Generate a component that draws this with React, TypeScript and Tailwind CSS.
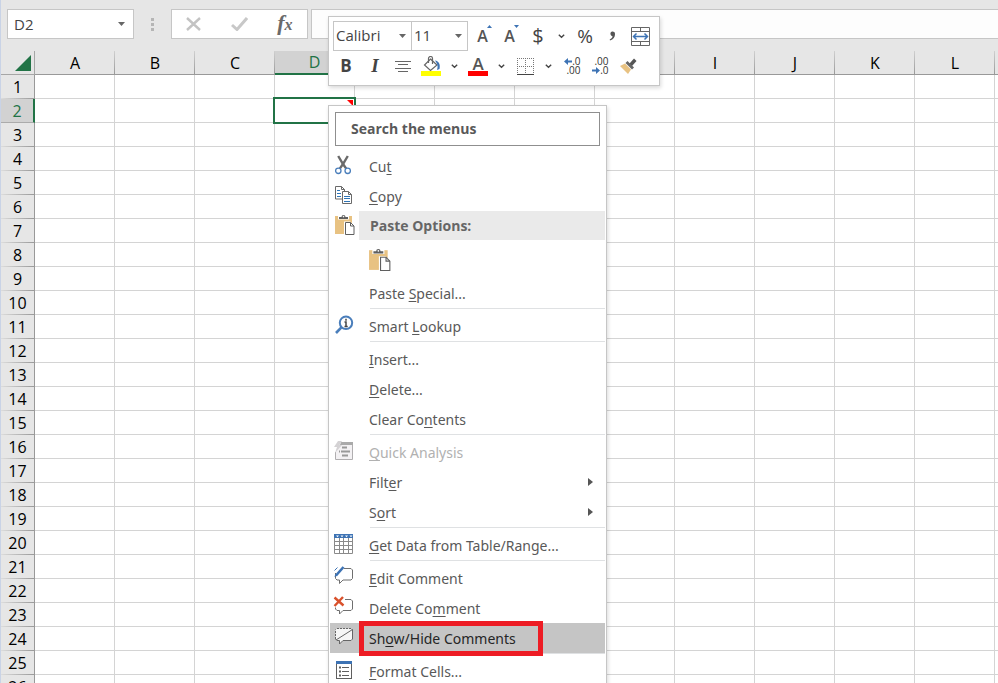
import type { ReactNode } from "react";

const COLUMNS = ["A", "B", "C", "D", "E", "F", "G", "H", "I", "J", "K", "L"];
const ROWS = Array.from({ length: 26 }, (_, i) => i + 1);

/* ---------- icons ---------- */

function Icon({ children }: { children: ReactNode }) {
  return (
    <svg width="20" height="20" viewBox="0 0 20 20" fill="none" className="block shrink-0 overflow-visible" aria-hidden="true">
      {children}
    </svg>
  );
}

const CutIcon = () => (
  <Icon>
    <path d="M4.2 1 L9 9 L12.2 13.6" stroke="#6a6a6a" strokeWidth="2.4" />
    <path d="M13.8 1 L9 9 L5.8 13.6" stroke="#6a6a6a" strokeWidth="2.4" />
    <circle cx="4.3" cy="15.8" r="2.7" fill="#fff" stroke="#4a7ebb" strokeWidth="1.3" />
    <circle cx="13.7" cy="15.8" r="2.7" fill="#fff" stroke="#4a7ebb" strokeWidth="1.3" />
  </Icon>
);

const CopyIcon = () => (
  <Icon>
    <path d="M1.5 1.5h6l3 3v9.500h-9z" fill="#fff" stroke="#6a6a6a" />
    <path d="M7.500 1.500v3h3" stroke="#6a6a6a" />
    <path d="M3 5.500h3M3 8.500h4M3 11.500h4" stroke="#2e75b6" />
    <path d="M8.500 6.500h6l3 3v9h-9z" fill="#fff" stroke="#6a6a6a" />
    <path d="M14.500 6.500v3h3" stroke="#6a6a6a" />
    <path d="M10 11.500h6M10 13.500h6M10 16.500h6" stroke="#2e75b6" />
  </Icon>
);

function PasteIcon({ className }: { className: string }) {
  return (
    <svg viewBox="0 0 20 21" fill="none" className={className} aria-hidden="true">
      <rect x="0" y="2" width="17" height="18" fill="#e8c282" />
      <path d="M3 1.500h11v4H3z" fill="#fff" />
      <path d="M4 5V3h2.500a2 2 0 0 1 4 0H13v2z" fill="#5f5f5f" />
      <circle cx="8.500" cy="2.600" r="0.800" fill="#fff" />
      <path d="M9 7.500h6l5 5v8.500H9z" fill="#fff" />
      <path d="M10.500 8.500h5l3.500 3.500v8.500h-8.500z" fill="#fff" stroke="#5f5f5f" />
      <path d="M15.500 8.500v3.500h3.500" stroke="#5f5f5f" />
    </svg>
  );
}

const LookupIcon = () => (
  <Icon>
    <circle cx="12" cy="7.800" r="6.200" stroke="#4a7ebb" strokeWidth="2" />
    <path d="M7.400 12.400L2 18" stroke="#4a7ebb" strokeWidth="2.600" />
    <path d="M12 3.800v2M10.500 7h1.500v4.500M10.500 11.500h3.200" stroke="#444" strokeWidth="1.500" />
  </Icon>
);

const AnalysisIcon = () => (
  <Icon>
    <path d="M7 2h11.500v16.500h-17V11" fill="#f3f1f3" stroke="#b0aeb0" />
    <path d="M7 1h12v3H6z" fill="#aaa" />
    <path d="M8 6.500h5M7 10.500h9M5 10.500h1M8 14.500h6" stroke="#999" strokeWidth="2" />
    <path d="M4 0h4L5.500 4H8L1 12l2-6H0z" fill="#d4d2d4" />
  </Icon>
);

const TableIcon = () => (
  <Icon>
    <path d="M0.500 4v15.500h18V4M0.500 7.500h18M0.500 11.500h18M0.500 15.500h18M5.500 4v15.500M9.500 4v15.500M14.500 4v15.500" stroke="#8a8a8a" />
    <rect x="0" y="0" width="19" height="4" fill="#3d73b4" />
    <path d="M2 1.500h3l-1.500 1.700zM6.500 1.500h3L8 3.200zM11 1.500h3l-1.500 1.700zM15.500 1.500h3L17 3.200z" fill="#fff" />
  </Icon>
);

const EditCommentIcon = () => (
  <Icon>
    <path d="M10 1.500h7l1.500 1.500v8.500l-1.500 1.500H9l-3.500 3.500V13H3l-1.500-1.500V6" stroke="#6f6f6f" />
    <path d="M2 8.500L9.500 0" stroke="#3d73b4" strokeWidth="2.600" />
    <path d="M0.500 3.500L3.500 0.500" stroke="#3d73b4" />
    <path d="M0.500 10l0.800-3 2 1.800z" fill="#3d73b4" />
  </Icon>
);

const DeleteCommentIcon = () => (
  <Icon>
    <path d="M11 2.500h6L18.500 4v8l-1.500 1.500H9L5.500 17v-3.500H3L1.500 12v-1.500" stroke="#6f6f6f" />
    <path d="M0.500 0.500L9.500 8.500M9 0L0.500 9" stroke="#d9512c" strokeWidth="2.400" />
  </Icon>
);

const ShowCommentIcon = () => (
  <Icon>
    <path d="M3 1.500h14L18.500 3v9l-1.500 1.500H9L5.500 17v-3.500H3L1.500 12V3z" fill="#f6f6f6" />
    <path d="M3 1.500h14l1.500 1.500M1.500 12V2.500" stroke="#666" strokeDasharray="2 1" />
    <path d="M18.500 2.500V12l-1.500 1.500H9L5.500 17v-3.500H3L1.500 12M2 13L18.500 2.500" stroke="#666" />
  </Icon>
);

const FormatIcon = () => (
  <Icon>
    <rect x="2.500" y="2.500" width="15" height="16" fill="#fff" stroke="#5f5f5f" />
    <rect x="2" y="1" width="16" height="3" fill="#3d73b4" />
    <path d="M8 7.500h7M8 11.500h7M8 15.500h7" stroke="#5f5f5f" />
    <path d="M5 7.500h2M5 11.500h2M5 15.500h2" stroke="#5f5f5f" strokeWidth="2" />
  </Icon>
);

const Caret = () => (
  <svg width="7" height="4" viewBox="0 0 7 4" className="block" aria-hidden="true">
    <path d="M0 0h7L3.500 4z" fill="#666" />
  </svg>
);

const Chevron = () => (
  <svg width="7" height="5" viewBox="0 0 7 5" fill="none" className="block" aria-hidden="true">
    <path d="M0.800 0.800L3.500 3.300L6.200 0.800" stroke="#444" strokeWidth="1.400" />
  </svg>
);

/* ---------- formula bar ---------- */

function FormulaBar() {
  return (
    <div className="flex h-[51px] items-start pt-[9px] pl-[6px]">
      <div className="flex h-[30px] w-[127px] shrink-0 items-center border border-[#c6c6c6] bg-white pr-2">
        <input
          aria-label="Name box"
          defaultValue="D2"
          className="w-full min-w-0 flex-1 bg-transparent pl-[6px] text-[15px] text-[#444] outline-none"
        />
        <button type="button" aria-label="Open name list">
          <Caret />
        </button>
      </div>
      <div className="flex h-[30px] w-[37px] shrink-0 flex-col items-center justify-center gap-[2px]">
        <span className="size-[3px] bg-[#b5b5b5]" />
        <span className="size-[3px] bg-[#b5b5b5]" />
        <span className="size-[3px] bg-[#b5b5b5]" />
      </div>
      <div className="flex h-[30px] w-[137px] shrink-0 items-center justify-around border border-[#c6c6c6] bg-white">
        <button type="button" aria-label="Cancel">
          <svg width="16" height="14" viewBox="0 0 16 14" fill="none">
            <path d="M1 1L14 13M14 1L1 13" stroke="#c3c3c3" strokeWidth="2.400" />
          </svg>
        </button>
        <button type="button" aria-label="Enter">
          <svg width="17" height="14" viewBox="0 0 17 14" fill="none">
            <path d="M1 8L6 12.500L16 1" stroke="#c8c8c8" strokeWidth="3" />
          </svg>
        </button>
        <button
          type="button"
          aria-label="Insert function"
          className="font-['Liberation_Serif',serif] text-[22px] leading-5 font-bold text-[#6a6a6a] italic"
        >
          f<span className="text-[16px]">x</span>
        </button>
      </div>
      <input
        aria-label="Formula"
        className="ml-[3px] h-[30px] min-w-0 flex-1 border border-r-0 border-[#c6c6c6] bg-[#fdfdfd] px-2 outline-none"
      />
    </div>
  );
}

/* ---------- sheet ---------- */

function Sheet() {
  return (
    <table className="w-full table-fixed border-separate border-spacing-0 text-[16px] leading-[22px] text-black">
      <colgroup>
        <col className="w-[34px]" />
        {COLUMNS.map((c) => (
          <col key={c} className="w-[80px]" />
        ))}
        <col />
      </colgroup>
      <thead>
        <tr className="h-6">
          <th className="relative border-r border-b border-[#a6a6a6] bg-[#e6e6e6] p-0">
            <svg width="16" height="16" viewBox="0 0 16 16" className="mr-[3px] ml-auto block" aria-hidden="true">
              <path d="M16 0v16H0z" fill="#217346" />
            </svg>
          </th>
          {COLUMNS.map((c) =>
            c === "D" ? (
              <th
                key={c}
                scope="col"
                className="border-r border-b-2 border-r-[#a6a6a6] border-b-[#217346] bg-[#d2d2d2] p-0 align-bottom leading-[21px] font-normal text-[#217346]"
              >
                {c}
              </th>
            ) : (
              <th
                key={c}
                scope="col"
                className="border-b border-[#999] bg-[linear-gradient(to_bottom,#d0d0d0,#999)] bg-[length:1px_100%] bg-right bg-no-repeat p-0 font-normal"
              >
                {c}
              </th>
            ),
          )}
          <th className="border-b border-[#999] p-0" />
        </tr>
      </thead>
      <tbody>
        {ROWS.map((r) => (
          <tr key={r} className="h-6">
            {r === 2 ? (
              <th
                scope="row"
                className="border-r-2 border-b border-r-[#217346] border-b-[#ababab] bg-[#d2d2d2] p-0 font-normal text-[#217346]"
              >
                {r}
              </th>
            ) : (
              <th
                scope="row"
                className="border-r border-[#999] bg-[linear-gradient(to_right,#dcdcdc,#999)] bg-[length:100%_1px] bg-bottom bg-no-repeat p-0 font-normal"
              >
                {r}
              </th>
            )}
            {COLUMNS.map((c) => (
              <td key={c} className="relative border-r border-b border-[#d4d4d4] bg-white p-0">
                {r === 2 && c === "D" && (
                  <div className="absolute -inset-[2px] z-10 border-2 border-[#217346]">
                    <svg width="6" height="6" viewBox="0 0 6 6" className="absolute top-px right-px" aria-hidden="true">
                      <path d="M0 0h6v6z" fill="#f00" />
                    </svg>
                  </div>
                )}
              </td>
            ))}
            <td className="border-b border-[#d4d4d4] bg-white p-0" />
          </tr>
        ))}
      </tbody>
    </table>
  );
}

/* ---------- mini toolbar ---------- */

function Tool({ label, className, children }: { label: string; className: string; children: ReactNode }) {
  return (
    <button type="button" aria-label={label} className={`flex h-[30px] shrink-0 items-center justify-center ${className}`}>
      {children}
    </button>
  );
}

function Combo({ label, value, className }: { label: string; value: string; className: string }) {
  return (
    <div className={`relative flex h-[30px] shrink-0 items-center border border-[#c6c6c6] ${className}`}>
      <select aria-label={label} defaultValue={value} className="h-full w-full appearance-none bg-transparent pb-[2px] pl-[2px] text-[15px] outline-none">
        <option>{value}</option>
      </select>
      <span className="pointer-events-none absolute right-[5px]">
        <Caret />
      </span>
    </div>
  );
}

function ResizeLetter({ up }: { up: boolean }) {
  return (
    <span className="relative pr-px text-[16px] leading-[22px] font-semibold text-[#555]">
      A
      <svg width="5" height="3" viewBox="0 0 5 3" className="absolute top-0 -right-[3px]" aria-hidden="true">
        {up ? <path d="M0 3L2.500 0L5 3z" fill="#3d73b4" /> : <path d="M0 0h5L2.500 3z" fill="#3d73b4" />}
      </svg>
    </span>
  );
}

function DecimalIcon({ increase }: { increase: boolean }) {
  return (
    <span className="flex w-[17px] flex-col text-[10px] leading-[9px] text-[#333]">
      <span className="flex items-center justify-between">
        {increase && (
          <svg width="8" height="7" viewBox="0 0 8 7" aria-hidden="true">
            <path d="M0 3.500L4 0v2.500h4v2H4V7z" fill="#3d73b4" />
          </svg>
        )}
        <span className="ml-auto">{increase ? ".0" : ".00"}</span>
      </span>
      <span className="flex items-center justify-between">
        {!increase && (
          <svg width="8" height="7" viewBox="0 0 8 7" aria-hidden="true">
            <path d="M8 3.500L4 0v2.500H0v2h4V7z" fill="#3d73b4" />
          </svg>
        )}
        <span className="ml-auto">{increase ? ".00" : ".0"}</span>
      </span>
    </span>
  );
}

function MiniToolbar() {
  return (
    <div
      role="toolbar"
      aria-label="Formatting"
      className="absolute top-[16px] left-[328px] z-20 w-[332px] border border-[#c6c6c6] bg-white py-1 pl-1 text-[#444] shadow-[1px_2px_4px_rgba(0,0,0,0.15)]"
    >
      <div className="flex">
        <Combo label="Font" value="Calibri" className="w-[79px]" />
        <Combo label="Font size" value="11" className="-ml-px w-[57px]" />
        <Tool label="Increase font size" className="w-[30px]"><ResizeLetter up /></Tool>
        <Tool label="Decrease font size" className="w-[24px]"><ResizeLetter up={false} /></Tool>
        <Tool label="Accounting format" className="w-[32px] text-[20px] leading-5 font-medium">$</Tool>
        <Tool label="Accounting options" className="w-[14px]"><Chevron /></Tool>
        <Tool label="Percent style" className="w-[34px] text-[19px] leading-5">%</Tool>
        <Tool label="Comma style" className="w-[20px]">
          <svg width="7" height="10" viewBox="0 0 7 10" aria-hidden="true">
            <path d="M3 0.500a2.500 2.500 0 0 1 3 2.700C6 6 4.500 8.500 1 9.500L0.700 8.500C2.500 7.800 3.500 6.500 3.500 5.300A2.500 2.500 0 0 1 3 0.500z" fill="#555" />
          </svg>
        </Tool>
        <Tool label="Merge and center" className="w-[36px]">
          <svg width="19" height="19" viewBox="0 0 19 19" fill="none" aria-hidden="true">
            <path d="M0.500 0.500h18v18H0.500zM0.500 4.500h18M0.500 14.500h18M9.500 0.500v4M9.500 14.500v4" stroke="#666" />
            <path d="M3 9.500h13M5.500 6.500L2.500 9.500l3 3M13.500 6.500l3 3-3 3" stroke="#3d73b4" strokeWidth="1.500" />
          </svg>
        </Tool>
      </div>
      <div className="flex">
        <Tool label="Bold" className="w-[26px] text-[17px] font-bold">B</Tool>
        <Tool label="Italic" className="w-[32px] font-['Liberation_Serif',serif] text-[19px] font-bold italic">I</Tool>
        <Tool label="Center" className="w-[24px]">
          <svg width="17" height="13" viewBox="0 0 17 13" aria-hidden="true">
            <path d="M0 1.500h16M3 4.500h10M0 8.500h16M3 11.500h10" stroke="#666" />
          </svg>
        </Tool>
        <Tool label="Fill color" className="w-[32px]">
          <svg width="20" height="20" viewBox="0 0 20 20" fill="none" aria-hidden="true">
            <rect x="0" y="15" width="20" height="5" fill="#ff0" />
            <path d="M9.500 3L16 9l-6.500 5.500L3.500 9z" fill="#fff" stroke="#666" strokeWidth="1.200" />
            <path d="M7.500 7V2.500a2 2 0 0 1 4 0V8" stroke="#666" strokeWidth="1.200" />
            <path d="M14 4.500c4 0.500 5.500 4 4.500 8.500l-2.500 1c1-3 1-5.500-2-9.500z" fill="#3d73b4" />
          </svg>
        </Tool>
        <Tool label="Fill options" className="w-[14px]"><Chevron /></Tool>
        <Tool label="Font color" className="w-[34px]">
          <span className="flex w-5 flex-col items-center border-b-5 border-[#f00] text-[17px] leading-[15px] font-semibold text-[#555]">
            A
          </span>
        </Tool>
        <Tool label="Font color options" className="w-[12px]"><Chevron /></Tool>
        <Tool label="Borders" className="w-[36px]">
          <svg width="17" height="17" viewBox="0 0 17 17" fill="none" aria-hidden="true">
            <path d="M0 0.500h17M0 8.500h17M0.500 0v16M8.500 0v16M16.500 0v16" stroke="#777" strokeDasharray="1 1" />
            <path d="M0 16.500h17" stroke="#444" />
          </svg>
        </Tool>
        <Tool label="Border options" className="w-[10px]"><Chevron /></Tool>
        <Tool label="Increase decimal" className="w-[38px]"><DecimalIcon increase /></Tool>
        <Tool label="Decrease decimal" className="w-[18px]"><DecimalIcon increase={false} /></Tool>
        <Tool label="Format painter" className="w-[38px]">
          <svg width="17" height="17" viewBox="0 0 17 17" aria-hidden="true">
            <path d="M0 8l5-2.500 6 6L8 16z" fill="#e8c282" />
            <path d="M5.500 5l2-2 6.500 6.500-2 2z" fill="#666" />
            <path d="M9.500 5.500L14 0.500l2.500 2.500-4.500 5z" fill="#555" />
          </svg>
        </Tool>
      </div>
    </div>
  );
}

/* ---------- context menu ---------- */

type ItemProps = {
  before?: string;
  hot: string;
  after?: string;
  icon?: ReactNode;
  disabled?: boolean;
  submenu?: boolean;
  active?: boolean;
};

function Item({ before, hot, after, icon, disabled, submenu, active }: ItemProps) {
  const tone = disabled ? "text-[#b1b1b1]" : active ? "bg-[#c5c5c5] text-[#262626]" : "text-[#595959]";
  return (
    <button type="button" role="menuitem" disabled={disabled} className={`relative flex h-[30px] w-full text-left ${tone}`}>
      <span className="w-[39px] shrink-0 pt-1 pl-1">{icon}</span>
      <span className="flex-1 leading-[31px] whitespace-nowrap">
        {before}
        <span className="underline decoration-1 underline-offset-2">{hot}</span>
        {after}
      </span>
      {submenu && (
        <svg width="5" height="8" viewBox="0 0 5 8" className="mr-3 self-center" aria-hidden="true">
          <path d="M0 0l5 4-5 4z" fill="#555" />
        </svg>
      )}
      {active && <span className="absolute -top-[2px] left-[29px] z-10 h-[35px] w-[184px] border-5 border-[#ed1c24]" />}
    </button>
  );
}

const Divider = () => <div role="separator" className="ml-10 h-[3px] border-t border-[#dfe1e3]" />;

function ContextMenu() {
  return (
    <div
      role="menu"
      className="absolute top-[105px] left-[328px] z-20 w-[279px] border border-[#c6c6c6] bg-white p-px font-['Noto_Sans',sans-serif] text-[14px] shadow-[1px_2px_4px_rgba(0,0,0,0.15)]"
    >
      <div className="px-[5px] pt-[5px] pb-[5px]">
        <input
          aria-label="Search the menus"
          placeholder="Search the menus"
          className="block h-[34px] w-full border border-[#8f8f8f] pb-[2px] pl-[15px] font-['Open_Sans',sans-serif] text-[14px] font-bold outline-none placeholder:text-[#595959]"
        />
      </div>
      <Item before="Cu" hot="t" icon={<CutIcon />} />
      <Item hot="C" after="opy" icon={<CopyIcon />} />
      <div className="flex h-[29px]">
        <span className="w-[29px] shrink-0 pt-[3px] pl-[5px]">
          <PasteIcon className="block h-[21px] w-[20px]" />
        </span>
        <span className="flex-1 bg-[#eaeaea] pl-[11px] font-['Open_Sans',sans-serif] leading-[29px] font-bold text-[#666]">
          Paste Options:
        </span>
      </div>
      <div className="flex h-[38px] items-center pl-[39px]">
        <button type="button" role="menuitem" aria-label="Paste">
          <PasteIcon className="block h-[23px] w-[22px]" />
        </button>
      </div>
      <Item before="Paste " hot="S" after="pecial..." />
      <Divider />
      <Item before="Smart " hot="L" after="ookup" icon={<LookupIcon />} />
      <Divider />
      <Item hot="I" after="nsert..." />
      <Item hot="D" after="elete..." />
      <Item before="Clear Co" hot="n" after="tents" />
      <Divider />
      <Item hot="Q" after="uick Analysis" icon={<AnalysisIcon />} disabled />
      <Item before="Filt" hot="e" after="r" submenu />
      <Item before="S" hot="o" after="rt" submenu />
      <Divider />
      <Item hot="G" after="et Data from Table/Range..." icon={<TableIcon />} />
      <Divider />
      <Item hot="E" after="dit Comment" icon={<EditCommentIcon />} />
      <Item before="Delete Co" hot="m" after="ment" icon={<DeleteCommentIcon />} />
      <Item before="Sh" hot="o" after="w/Hide Comments" icon={<ShowCommentIcon />} active />
      <Divider />
      <Item hot="F" after="ormat Cells..." icon={<FormatIcon />} />
    </div>
  );
}

export default function App() {
  return (
    <main className="relative h-screen w-full overflow-hidden border-l border-[#c9d3e6] bg-[#e6e6e6] font-['Open_Sans','Noto_Sans',sans-serif]">
      <FormulaBar />
      <Sheet />
      <div className="absolute inset-y-0 -left-px">
        <MiniToolbar />
        <ContextMenu />
      </div>
    </main>
  );
}
